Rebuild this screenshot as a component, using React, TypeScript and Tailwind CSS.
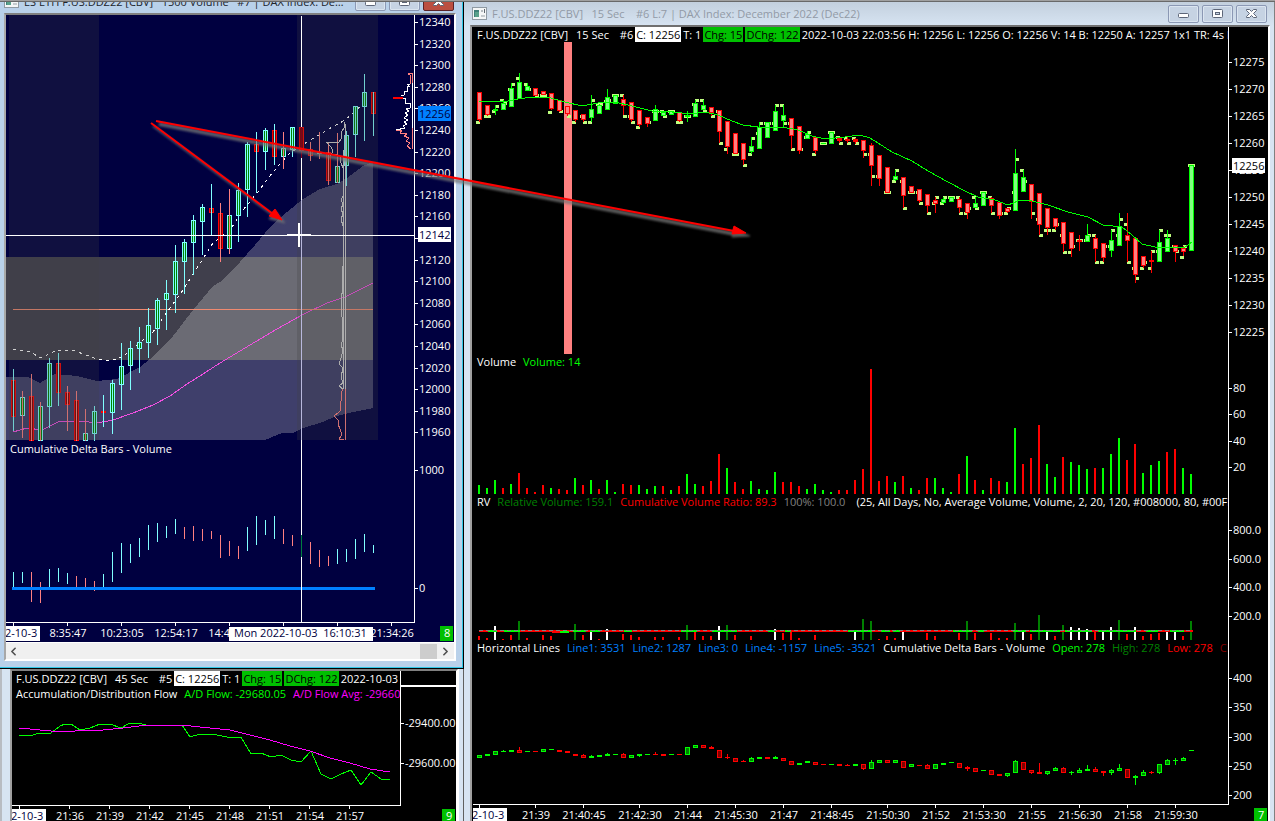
import type { ReactNode } from 'react';
import { ChevronLeft, ChevronRight } from 'lucide-react';

// [up, bodyTop, bodyBottom, high, low, leftMark, rightMark]
type Candle = [number, number, number, number, number, number, number];

const PRICE: Candle[] = [
  [0, 92, 120, 92, 122, 122, 0], [0, 105, 115, 105, 116, 116, 116], [1, 109, 111, 105, 115, 111, 106],
  [1, 103, 110, 100, 110, 100, 103], [1, 88, 107, 83, 107, 89, 84], [1, 82, 99, 73, 99, 78, 0],
  [1, 86, 91, 83, 91, 84, 89], [0, 88, 96, 88, 96, 0, 95], [0, 91, 95, 91, 95, 95, 95],
  [0, 93, 109, 93, 110, 112, 0], [0, 100, 111, 100, 112, 0, 111], [0, 106, 114, 106, 116, 0, 116],
  [0, 110, 120, 110, 122, 122, 0], [0, 114, 120, 114, 122, 116, 122], [1, 109, 118, 95, 122, 122, 100],
  [1, 105, 114, 104, 114, 104, 104], [1, 97, 110, 89, 110, 101, 100], [1, 95, 104, 95, 104, 95, 95],
  [0, 99, 106, 95, 115, 95, 116], [0, 102, 120, 102, 122, 116, 122], [0, 110, 125, 110, 127, 127, 0],
  [0, 117, 124, 117, 127, 0, 122], [1, 109, 121, 105, 121, 111, 111], [1, 112, 116, 112, 116, 111, 116],
  [1, 111, 115, 111, 115, 111, 111], [0, 112, 121, 112, 122, 122, 122], [1, 115, 117, 111, 122, 116, 116],
  [1, 103, 117, 100, 117, 104, 100], [1, 105, 110, 100, 110, 100, 111], [0, 107, 113, 107, 116, 0, 116],
  [0, 110, 132, 110, 143, 111, 143], [0, 121, 147, 121, 154, 149, 0], [0, 133, 154, 133, 154, 154, 154],
  [0, 143, 160, 143, 165, 0, 165], [1, 146, 152, 137, 154, 154, 138], [1, 127, 149, 122, 149, 133, 123],
  [1, 122, 138, 122, 138, 123, 123], [1, 111, 131, 105, 131, 123, 105], [1, 115, 121, 105, 127, 105, 123],
  [0, 118, 136, 118, 149, 123, 149], [0, 126, 151, 126, 154, 0, 149], [1, 134, 139, 131, 139, 137, 132],
  [0, 137, 151, 137, 154, 154, 0], [1, 143, 144, 143, 144, 143, 143], [1, 132, 144, 132, 144, 132, 132],
  [0, 138, 141, 138, 143, 137, 143], [0, 139, 141, 137, 143, 138, 143], [0, 139, 142, 138, 144, 138, 143],
  [0, 140, 151, 140, 158, 0, 154], [0, 145, 166, 143, 186, 154, 176], [0, 155, 179, 155, 186, 176, 0],
  [0, 167, 193, 167, 193, 192, 192], [1, 176, 180, 170, 181, 181, 170], [0, 177, 196, 177, 208, 181, 208],
  [0, 186, 193, 186, 193, 192, 192], [0, 189, 201, 189, 203, 192, 203], [0, 194, 206, 194, 213, 0, 213],
  [0, 200, 204, 197, 213, 203, 197], [1, 199, 203, 197, 204, 203, 197], [1, 197, 202, 197, 202, 197, 197],
  [0, 199, 208, 197, 213, 197, 213], [0, 203, 213, 203, 219, 213, 208], [1, 203, 208, 197, 208, 197, 208],
  [1, 192, 206, 192, 206, 192, 192], [0, 198, 206, 197, 213, 197, 213], [0, 202, 216, 202, 219, 0, 213],
  [0, 208, 212, 208, 213, 213, 208], [1, 173, 211, 149, 211, 192, 159], [1, 177, 192, 170, 192, 170, 181],
  [0, 184, 202, 184, 219, 0, 213], [0, 193, 225, 193, 235, 219, 235], [0, 208, 228, 208, 235, 230, 230],
  [0, 218, 227, 218, 230, 230, 224], [0, 222, 244, 222, 252, 235, 252], [0, 232, 249, 232, 257, 252, 246],
  [0, 240, 242, 235, 251, 240, 240], [1, 235, 242, 224, 242, 240, 235], [0, 238, 249, 235, 262, 235, 262],
  [0, 243, 258, 243, 262, 262, 246], [1, 240, 251, 230, 257, 246, 230], [1, 226, 246, 213, 246, 235, 219],
  [0, 235, 241, 213, 262, 224, 262], [0, 238, 275, 238, 283, 268, 278], [0, 256, 266, 256, 268, 268, 262],
  [0, 260, 262, 251, 273, 268, 251], [1, 242, 262, 230, 262, 251, 230], [1, 238, 252, 230, 252, 235, 235],
  [0, 245, 252, 245, 262, 246, 251], [0, 248, 252, 246, 256, 257, 246], [1, 165, 251, 165, 251, 165, 165],
];

const MOVING_AVG =
  '479,101 508,101 518,99 532,97 547,97 565,102 582,106 598,103 615,102 632,106 652,111 672,112 692,114 705,112 718,115 732,121 743,125 758,127 782,127 798,130 812,136 825,139 845,137 860,135 870,138 878,143 892,152 912,161 928,171 948,182 965,191 978,197 995,200 1008,205 1018,201 1028,200 1048,205 1068,212 1088,217 1103,225 1122,227 1132,235 1142,244 1155,247 1185,247 1192,242';

// positive = buying volume, negative = selling volume
const VOLUME = [
  9, 6, 14, -6, 10, -21, -6, -2, -9, 6, -5, -4, 16, -9, 14, -5, 14, 2, -10, -9, 9, 5, 8, -8, 4, -8, 20, 10, -8, -13,
  -40, 26, -12, -5, 13, 5, 4, 22, -12, -12, -8, 5, 10, 4, 2, -4, -4, -14, -25, -125, -13, -18, 12, -18, 6, -4, -16,
  16, 6, 2, -20, 38, -14, 4, -16, -13, 12, 66, -30, -36, -69, 30, 17, -37, 32, 29, 25, -26, 26, 40, 56, -34, -50, 21,
  29, 33, -42, -45, 26, 20,
];

const RELATIVE: [number, number, string][] = [
  [0, 4, 'r'], [1, 2, 'r'], [2, 14, 'w'], [3, 1, 'r'], [4, 5, 'r'], [5, 19, 'g'], [6, 2, 'r'], [8, 5, 'r'],
  [9, 4, 'r'], [12, 16, 'g'], [13, 5, 'r'], [14, 8, 'w'], [15, 1, 'r'], [16, 11, 'w'], [18, 6, 'r'], [19, 5, 'r'],
  [20, 3, 'r'], [22, 3, 'r'], [23, 3, 'r'], [25, 3, 'r'], [26, 15, 'g'], [27, 8, 'r'], [28, 4, 'r'], [29, 4, 'r'],
  [30, 14, 'w'], [31, 15, 'g'], [32, 5, 'r'], [34, 4, 'r'], [37, 11, 'w'], [38, 7, 'r'], [39, 8, 'r'], [40, 2, 'r'],
  [42, 5, 'r'], [47, 8, 'w'], [48, 21, 'g'], [49, 19, 'g'], [50, 1, 'r'], [51, 4, 'r'], [52, 2, 'r'], [53, 8, 'w'],
  [56, 7, 'r'], [57, 4, 'r'], [60, 7, 'r'], [61, 19, 'g'], [62, 7, 'r'], [64, 7, 'r'], [65, 2, 'r'], [66, 2, 'r'],
  [67, 17, 'g'], [68, 8, 'w'], [69, 6, 'r'], [70, 25, 'g'], [71, 8, 'w'], [72, 4, 'r'], [73, 15, 'g'], [74, 13, 'w'],
  [75, 12, 'w'], [76, 11, 'w'], [77, 9, 'r'], [78, 8, 'w'], [79, 13, 'w'], [80, 20, 'g'], [81, 6, 'r'], [82, 13, 'w'],
  [83, 4, 'r'], [84, 6, 'r'], [85, 7, 'r'], [86, 8, 'w'], [87, 8, 'w'], [88, 4, 'r'], [89, 19, 'g'],
];

const RATIO_UP: [number, number][] = [
  [488, 497], [504, 520], [573, 586], [590, 600], [624, 632], [681, 697], [712, 737], [768, 775], [785, 791],
  [848, 872], [881, 890], [893, 900], [953, 972], [978, 984], [1013, 1026], [1030, 1060], [1065, 1092],
  [1098, 1136], [1146, 1158], [1170, 1184],
];

// [up, top, bottom, high, low]
const DELTA: [number, number, number, number, number][] = [
  [1, 755, 758, 755, 758], [1, 754, 756, 754, 756], [1, 751, 755, 751, 755], [1, 751, 752, 750, 752],
  [1, 750, 752, 750, 752], [0, 750, 753, 747, 753], [1, 751, 752, 751, 752], [0, 751, 752, 751, 752],
  [1, 749, 752, 749, 752], [1, 749, 750, 749, 750], [0, 750, 752, 750, 752], [0, 751, 753, 751, 753],
  [0, 754, 756, 754, 756], [0, 755, 758, 754, 758], [1, 756, 758, 755, 758], [1, 755, 757, 755, 757],
  [1, 754, 756, 753, 756], [1, 754, 755, 754, 755], [0, 754, 758, 753, 758], [1, 755, 758, 755, 758],
  [1, 754, 756, 754, 757], [1, 754, 755, 754, 755], [0, 754, 755, 752, 755], [0, 754, 756, 754, 756],
  [1, 754, 755, 754, 755], [0, 754, 755, 754, 755], [1, 747, 755, 747, 755], [1, 745, 748, 745, 748],
  [0, 745, 748, 745, 748], [0, 747, 749, 746, 749], [0, 750, 758, 750, 758], [0, 757, 758, 754, 759],
  [0, 758, 762, 758, 762], [0, 761, 762, 760, 762], [1, 758, 762, 757, 762], [1, 757, 759, 757, 759],
  [0, 757, 759, 757, 759], [1, 757, 759, 756, 759], [0, 758, 761, 758, 761], [0, 761, 765, 761, 765],
  [1, 763, 765, 763, 765], [1, 761, 763, 761, 763], [0, 762, 765, 762, 765], [0, 764, 765, 764, 765],
  [1, 764, 765, 764, 765], [0, 764, 766, 764, 766], [0, 765, 766, 764, 766], [1, 764, 766, 764, 766],
  [0, 764, 769, 764, 770], [1, 762, 769, 760, 769], [1, 760, 763, 760, 763], [0, 760, 763, 760, 763],
  [1, 760, 763, 760, 763], [0, 761, 768, 761, 768], [1, 764, 767, 764, 767], [0, 765, 766, 765, 766],
  [0, 765, 769, 764, 769], [1, 764, 769, 764, 769], [1, 763, 765, 763, 765], [1, 762, 763, 762, 763],
  [0, 763, 768, 763, 768], [0, 767, 769, 766, 771], [0, 768, 772, 768, 772], [1, 770, 771, 770, 771],
  [0, 770, 775, 770, 775], [0, 774, 776, 774, 776], [1, 773, 776, 773, 777], [1, 761, 773, 760, 773],
  [0, 762, 770, 762, 770], [0, 770, 773, 770, 774], [0, 772, 774, 763, 774], [1, 771, 774, 771, 775],
  [1, 768, 771, 767, 771], [0, 768, 773, 767, 773], [1, 772, 773, 771, 775], [1, 770, 773, 768, 773],
  [1, 769, 771, 765, 771], [0, 769, 772, 767, 772], [0, 771, 773, 771, 776], [1, 770, 773, 769, 775],
  [1, 768, 771, 764, 771], [0, 769, 778, 769, 778], [1, 776, 778, 775, 785], [1, 772, 776, 770, 776],
  [0, 772, 773, 771, 774], [1, 764, 773, 764, 774], [1, 760, 765, 759, 765], [1, 760, 761, 758, 765],
  [1, 758, 761, 757, 761], [1, 750, 751, 750, 751],
];

// [up, top, bottom, high, low, wickUp]
const SWING: [number, number, number, number, number, number][] = [
  [0, 380, 417, 369, 431, 1], [1, 397, 416, 391, 438, 0], [0, 396, 441, 374, 441, 0], [1, 406, 441, 402, 441, 0],
  [1, 363, 407, 358, 428, 1], [0, 363, 393, 353, 406, 1], [0, 392, 405, 386, 431, 0], [0, 400, 441, 391, 441, 0],
  [1, 433, 441, 409, 441, 0], [1, 411, 434, 406, 441, 1], [0, 411, 413, 395, 427, 1], [1, 383, 413, 380, 434, 1],
  [1, 366, 385, 343, 410, 1], [1, 348, 366, 341, 390, 1], [1, 342, 349, 327, 373, 1], [1, 325, 343, 308, 358, 1],
  [1, 300, 329, 298, 345, 1], [1, 293, 300, 280, 330, 1], [1, 261, 295, 245, 313, 1], [1, 242, 262, 239, 294, 1],
  [1, 220, 243, 215, 275, 1], [1, 207, 222, 204, 255, 1], [0, 208, 213, 184, 235, 1], [0, 213, 249, 203, 262, 0],
  [1, 215, 249, 189, 254, 0], [1, 190, 216, 183, 242, 1], [1, 144, 190, 142, 217, 1], [0, 144, 152, 132, 193, 1],
  [1, 130, 152, 128, 170, 1], [0, 130, 157, 124, 165, 1], [1, 148, 157, 132, 169, 0], [1, 127, 150, 127, 157, 1],
  [0, 127, 151, 122, 158, 0], [0, 149, 156, 142, 161, 0], [1, 152, 154, 132, 159, 0], [0, 152, 181, 143, 185, 0],
  [1, 166, 183, 133, 183, 0], [1, 135, 166, 131, 186, 1], [1, 106, 135, 106, 157, 1], [1, 92, 107, 74, 141, 1],
  [0, 92, 114, 92, 136, 1],
];

const SWING_DELTA: [number, number, number][] = [
  [1, 572, 588], [1, 572, 583], [0, 572, 602], [0, 582, 603], [1, 569, 588], [1, 568, 582], [1, 573, 584],
  [0, 576, 588], [0, 578, 588], [0, 581, 591], [1, 574, 588], [1, 552, 582], [1, 543, 573], [1, 544, 563],
  [1, 538, 557], [1, 525, 550], [1, 523, 542], [1, 526, 538], [1, 519, 534], [0, 527, 539], [0, 526, 541],
  [0, 529, 541], [0, 531, 539], [0, 535, 558], [0, 541, 556], [0, 546, 559], [1, 527, 551], [1, 516, 545],
  [1, 520, 535], [1, 516, 539], [0, 529, 544], [0, 535, 546], [1, 535, 557], [0, 542, 564], [0, 550, 567],
  [0, 556, 566], [1, 549, 564], [1, 549, 562], [1, 539, 559], [1, 534, 552], [1, 545, 553],
];

const CLOUD =
  '6,377 28,377 40,383 55,374 77,376 97,381 117,379 140,367 150,359 170,340 193,310 213,286 222,281 240,262 255,245 270,227 287,212 303,199 320,189 337,184 347,178 363,166 373,162 373,408 353,412 337,416 320,423 303,428 293,433 282,433 265,440 6,440';

const FONT = 'font-["Open_Sans","Noto_Sans",sans-serif]';

type PlotProps = { x: number; y: number; className: string; children: ReactNode };

// Drawing surface that shares one coordinate space across panes
function Plot({ x, y, className, children }: PlotProps) {
  return (
    <svg className={`block w-full ${className}`} shapeRendering="crispEdges">
      <g transform={`translate(${-x} ${-y})`}>{children}</g>
    </svg>
  );
}

type Mark = [string, number];

function Scale({ x, y, className, marks, children }: Omit<PlotProps, 'children'> & { marks: Mark[]; children?: ReactNode }) {
  return (
    <svg className={`block shrink-0 text-[11px] ${className}`} shapeRendering="crispEdges">
      <g transform={`translate(${-x} ${-y})`}>
        {marks.map(([label, my]) => (
          <g key={label}>
            <rect x={x} y={my} width={3} height={1} fill="#fff" />
            <text x={x + 4} y={my + 4} fill="#fff">{label}</text>
          </g>
        ))}
        {children}
      </g>
    </svg>
  );
}

function TimeScale({ x, y, end, marks, tick, children }: { x: number; y: number; end: number; marks: Mark[]; tick: number; children?: ReactNode }) {
  return (
    <svg className="block h-5 w-full text-[11px]" shapeRendering="crispEdges">
      <g transform={`translate(${-x} ${-y})`}>
        <rect x={x} y={y} width={end - x} height={1} fill="#fff" />
        <rect x={tick} y={y} width={1} height={4} fill="#fff" />
        {marks.map(([label, mx]) => (
          <g key={label}>
            <rect x={mx} y={y} width={1} height={4} fill="#fff" />
            <text x={mx + 1} y={y + 15} textAnchor="middle" fill="#fff">{label}</text>
          </g>
        ))}
        <rect x={x} y={y + 4} width={34} height={15} fill="#fff" />
        <text x={x - 1} y={y + 15} fill="#000040">2-10-3</text>
        {children}
      </g>
    </svg>
  );
}

function Legend({ children }: { children: ReactNode }) {
  return <div className="flex h-[15px] items-center gap-[7px] overflow-hidden pl-1 text-[11px] leading-[15px] whitespace-pre text-white">{children}</div>;
}

function Quote({ period, chart }: { period: string; chart: string }) {
  return (
    <div className="flex h-[15px] shrink-0 items-center text-[11px] leading-[15px] whitespace-pre">
      <span>F.US.DDZ22 [CBV]</span>
      <span className="ml-2">{period}</span>
      <span className="ml-2">{chart}</span>
      <span className="ml-0.5 bg-white px-px text-black">C: 12256</span>
      <span className="mx-0.5">T: 1</span>
      <span className="bg-[#00c000] px-px text-black">Chg: 15</span>
      <span className="ml-0.5 bg-[#00c000] px-px text-black">DChg: 122</span>
    </div>
  );
}

function AppIcon() {
  return (
    <svg className="h-3.5 w-[15px] shrink-0" viewBox="0 0 15 14">
      <rect x="0.5" y="0.5" width="14" height="12" fill="#f4f6f6" stroke="#8f9aa3" />
      <rect x="2" y="3" width="5" height="7" fill="#3f7f78" />
      <rect x="3" y="5" width="4" height="5" fill="#58a18a" />
      <rect x="9" y="3" width="2" height="2" fill="#b5bcc0" />
      <rect x="12" y="2" width="1" height="4" fill="#5f6870" />
      <rect x="9" y="8" width="4" height="2" fill="#c4cacd" />
    </svg>
  );
}

function TitleBar({ title, active }: { title: string; active?: boolean }) {
  const button = 'flex h-[18px] w-[31px] items-center justify-center rounded-[2px] border border-[#8b98b4] bg-[#c6d3e3] shadow-[inset_0_0_0_1px_#dbe5f0]';
  return (
    <div className="flex h-[23px] shrink-0 items-center">
      <AppIcon />
      <h2 className={`ml-[5px] flex-1 truncate pr-2 text-[11px] leading-5 whitespace-pre ${active ? 'text-[#20242c]' : 'text-[#929aa6]'}`}>{title}</h2>
      <div className="flex gap-[3px]">
        <button aria-label="Minimize" className={button}>
          <svg width="13" height="11" viewBox="0 0 13 11"><rect x="1.5" y="5.5" width="10" height="4" rx="1" fill="#fff" stroke="#5d6678" /></svg>
        </button>
        <button aria-label="Maximize" className={button}>
          <svg width="13" height="11" viewBox="0 0 13 11">
            <rect x="1.5" y="1.5" width="10" height="8" rx="1" fill="#fff" stroke="#5d6678" />
            <rect x="4.5" y="4.5" width="4" height="2" fill="#c6d3e3" stroke="#5d6678" />
          </svg>
        </button>
        <button
          aria-label="Close"
          className={active ? 'flex h-[18px] w-[31px] items-center justify-center rounded-[2px] border border-[#5b2226] bg-[#bb4f41]' : button}
        >
          <svg width="13" height="11" viewBox="0 0 13 11">
            <path d="M1.5 1.5h3l2 2 2-2h3v1l-3 3 3 3v1h-3l-2-2-2 2h-3v-1l3-3-3-3z" fill="#fff" stroke="#5d6678" />
          </svg>
        </button>
      </div>
    </div>
  );
}

function PriceCandles() {
  return (
    <>
      {PRICE.map(([, , , , , left, right], i) => (
        <g key={i} fill="#c0ff80">
          {left > 0 && <rect x={476 + i * 8} y={left - 1} width={4} height={3} />}
          {right > 0 && <rect x={479 + i * 8} y={right - 1} width={4} height={3} />}
        </g>
      ))}
      {PRICE.map(([up, top, bottom, high, low], i) => {
        const x = 479 + i * 8;
        const line = up ? '#00ff00' : '#ff0000';
        return (
          <g key={i}>
            <rect x={x} y={high} width={1} height={low - high} fill={line} />
            <rect x={x - 2} y={top} width={5} height={bottom - top} fill={line} />
            {bottom - top > 3 && <rect x={x - 1} y={top + 1} width={3} height={bottom - top - 2} fill={up ? '#80ff80' : '#ff8080'} />}
          </g>
        );
      })}
    </>
  );
}

function SwingPlot() {
  return (
    <Plot x={6} y={15} className="h-[426px]">
      <rect x={6} y={257} width={367} height={103} fill="#403f4c" />
      <polygon points={CLOUD} fill="#cfcfcf" fillOpacity={0.3} />
      <polyline points="13,432 27,428 42,430 60,421 80,421 97,423 113,420 133,413 153,405 170,396 187,384 203,374 220,363 250,345 277,329 302,315 327,303 345,297 373,283" fill="none" stroke="#f050e0" />
      <rect x={13} y={309} width={360} height={1} fill="#f08a70" />
      <polyline
        points="13,349 30,352 41,358 57,350 75,351 97,359 110,361 122,357 137,345 153,332 170,308 183,290 204,257 213,243 230,230 243,210 257,193 273,172 290,153 307,142 327,130 345,120 363,104"
        fill="none" stroke="#fff" strokeDasharray="3 4"
      />
      {SWING.map(([up, top, bottom, high, low, wickUp], i) => {
        const x = 13 + i * 9;
        return (
          <g key={i}>
            <rect x={x - 2} y={top} width={5} height={bottom - top} fill={up ? '#80ffff' : '#ff0000'} />
            {bottom - top > 3 && <rect x={x - 1} y={top + 1} width={3} height={bottom - top - 2} fill={up ? '#008000' : '#800000'} />}
            <rect x={x} y={high} width={1} height={low - high} fill={wickUp ? '#80ffff' : '#ff8080'} />
          </g>
        );
      })}
      {/* session volume profile */}
      <polyline points="345,122 344,128 341,133 341,139 339,142 326,142 328,144 331,147 333,151 331,155 337,154 340,157 341,163 343,168 343,196 341,200 343,204 341,209 343,214 341,219 343,226 343,266 342,267 343,293 341,294 343,339 341,345 343,350 341,358 339,364 343,368 341,377 343,383 339,386 343,389" fill="none" stroke="#d0d0d0" />
      <polyline points="343,389 341,393 342,398 340,404 341,410 338,413 334,416 338,420 338,424 340,429 342,435 339,439 344,440" fill="none" stroke="#ff8080" />
      <rect x={343} y={150} width={1} height={239} fill="#d0d0d0" />
      <rect x={345} y={124} width={1} height={265} fill="#d0d0d0" />
      <rect x={345} y={389} width={1} height={51} fill="#ff8080" />
      <rect x={9} y={15} width={90} height={425} fill="#404040" fillOpacity={0.25} />
      <rect x={297} y={15} width={81} height={425} fill="#404040" fillOpacity={0.25} />
      {/* full volume profile */}
      <rect x={412} y={73} width={1} height={76} fill="#fff" />
      <polyline points="412,73 408,74 410,75 410,84" fill="none" stroke="#ff8080" />
      <polyline points="410,84 407,84 409,86 407,86 407,91 404,91 404,95 401,96" fill="none" stroke="#fff" />
      <path d="M403 97H393M393 98H403" stroke="#ff0000" />
      <polyline points="403,98 405,98 405,103 410,103 410,108 406,109 409,111 405,113 408,115 404,118 408,120 404,122 407,124 403,126 405,128 396,130" fill="none" stroke="#fff" />
      <polyline points="396,130 402,130 400,133 407,134 404,136 409,138 406,141 410,143 407,146 411,149" fill="none" stroke="#ff8080" />
      <rect x={412} y={73} width={1} height={10} fill="#ff8080" />
      <rect x={412} y={128} width={1} height={21} fill="#ff8080" />
    </Plot>
  );
}

function SwingWindow() {
  const marks: Mark[] = Array.from({ length: 20 }, (_, k) => [String(12340 - k * 20), Math.round(22 + k * 21.6)]);
  return (
    <section className="flex shrink-0 flex-col border-r border-b border-black bg-[#b9d1ea]">
      <div className="flex flex-col border-r border-b border-[#30c8e8] pr-1.5 pb-1.5 pl-1">
        <div className="flex h-[11px] flex-col justify-end overflow-hidden pr-0.5">
          <TitleBar active title="ES ETH F.US.DDZ22 [CBV]   1500 Volume   #7 | DAX Index: December 2022 (Dec22)" />
        </div>
        <div className="border-2 border-t-[#808080] border-r-white border-b-white border-l-[#a8a8a8] bg-[#000040] text-white">
          <div className="relative">
            <div className="flex">
              <div className="min-w-0 flex-1 border-r border-white">
                <SwingPlot />
                <Legend>Cumulative Delta Bars - Volume</Legend>
                <Plot x={6} y={456} className="h-[166px]">
                  {SWING_DELTA.map(([up, top, bottom], i) => (
                    <rect key={i} x={13 + i * 9} y={top} width={1} height={bottom - top} fill={up ? '#80ffff' : '#ff8080'} />
                  ))}
                  <rect x={12} y={587} width={363} height={3} fill="#0080ff" />
                </Plot>
              </div>
              <Scale x={415} y={15} className="h-[607px] w-[39px]" marks={[...marks, ['1000', 470], ['0', 588]]}>
                <rect x={418} y={106} width={33} height={15} fill="#0080ff" />
                <text x={419} y={118} fill="#000040">12256</text>
                <rect x={418} y={227} width={33} height={15} fill="#fff" />
                <text x={419} y={239} fill="#000040">12142</text>
              </Scale>
            </div>
            {/* crosshair */}
            <svg className="pointer-events-none absolute inset-0 h-full w-full" shapeRendering="crispEdges">
              <rect x={0} y={220} width={408} height={1} fill="#fff" />
              <rect x={295} y={1} width={1} height={606} fill="#fff" />
              <rect x={295} y={185} width={1} height={240} fill="#b8b8dc" />
              <rect x={295} y={112} width={1} height={31} fill="#800020" />
              <rect x={295} y={520} width={1} height={22} fill="#008040" />
              <rect x={281} y={219} width={24} height={2} fill="#fff" />
              <rect x={292} y={208} width={2} height={24} fill="#fff" />
            </svg>
          </div>
          <TimeScale x={6} y={622} end={415} tick={13} marks={[['8:35:47', 67], ['10:23:05', 121], ['12:54:17', 175], ['14:44:12', 229], ['21:34:26', 391]]}>
            <rect x={283} y={622} width={1} height={4} fill="#fff" />
            <rect x={337} y={622} width={1} height={4} fill="#fff" />
            <rect x={229} y={627} width={144} height={14} fill="#fff" />
            <text x={234} y={637} fill="#000040" className="whitespace-pre">Mon 2022-10-03  16:10:31</text>
            <rect x={440} y={626} width={13} height={15} fill="#00c000" />
            <text x={444} y={637} fill="#fff">8</text>
          </TimeScale>
          <div className="flex h-[17px] items-center border-t border-white bg-[#f0f0f0] text-[#505050]">
            <button aria-label="Scroll left" className="flex w-3.5 justify-center"><ChevronLeft size={13} strokeWidth={3} /></button>
            <div className="flex flex-1 justify-end"><div className="h-[15px] w-[17px] bg-[#cdcdcd]" /></div>
            <button aria-label="Scroll right" className="flex w-[17px] justify-center"><ChevronRight size={13} strokeWidth={3} /></button>
          </div>
        </div>
      </div>
    </section>
  );
}

function FlowWindow() {
  const times = ['21:36', '21:39', '21:42', '21:45', '21:48', '21:51', '21:54', '21:57'];
  return (
    <section className="flex min-h-0 flex-1 border-l-2 border-[#b8bcc2] bg-[#d7e4f2] pl-2">
      <div className="min-w-0 flex-1 overflow-hidden border-2 border-r-2 border-b-0 border-t-[#808080] border-r-white border-l-[#a0a0a0] bg-black text-white">
        <div className="flex">
          <div className="min-w-0 flex-1 overflow-hidden border-r border-white">
            <div className="flex overflow-hidden pl-1 text-[11px] leading-[15px] whitespace-pre">
              <Quote period="45 Sec" chart=" #5" />
              <span className="ml-0.5">2022-10-03 22:03:56</span>
            </div>
            <Legend>
              <span>Accumulation/Distribution Flow</span>
              <span className="text-[#00ff00]">A/D Flow: -29680.05</span>
              <span className="text-[#ff00ff]">A/D Flow Avg: -29660.16</span>
            </Legend>
            <Plot x={12} y={701} className="h-[104px]">
              <polyline
                points="19,735 33,735 39,733 51,733 60,726 65,724 71,724 80,730 90,728 100,724 110,724 121,728 128,724 138,723 150,726 160,725 182,725 190,737 200,734 212,734 227,737 241,737 251,754 261,753 271,757 281,755 291,760 301,762 311,751 321,774 331,779 341,774 351,770 361,785 371,772 381,779 390,779"
                fill="none" stroke="#00ff00"
              />
              <polyline points="19,728 51,731 75,731 82,730 103,730 123,728 147,725 167,726 182,725 200,727 220,729 230,730 250,735 270,740 290,746 310,751 330,758 350,763 370,769 390,772" fill="none" stroke="#ff00ff" />
            </Plot>
          </div>
          <Scale x={401} y={671} className="h-[134px] w-[55px]" marks={[['-29400.00', 723], ['-29600.00', 763]]}>
            <rect x={401} y={685} width={55} height={2} fill="#fff" />
          </Scale>
        </div>
        <TimeScale x={12} y={805} end={401} tick={19} marks={times.map((t, i) => [t, 69 + i * 40])}>
          <rect x={442} y={809} width={13} height={15} fill="#00c000" />
          <text x={446} y={820} fill="#fff">9</text>
        </TimeScale>
      </div>
      <div className="w-[5px] border-l border-white bg-[#d7e4f2]" />
      <div className="w-px bg-[#606060]" />
    </section>
  );
}

const RV_FILL: Record<string, string> = { r: '#ff0000', w: '#ffffff', g: '#008000' };

type PaneProps = { legend: ReactNode; plot: ReactNode; scale: ReactNode };

function Pane({ legend, plot, scale }: PaneProps) {
  return (
    <div className="flex shrink-0">
      <div className="min-w-0 flex-1 overflow-hidden border-r border-white">
        <Legend>{legend}</Legend>
        {plot}
      </div>
      {scale}
    </div>
  );
}

function IntradayWindow() {
  return (
    <section className="flex min-w-0 flex-1 flex-col border-r border-[#808080] bg-linear-to-b from-[#c3d0de] to-[#d7e4f2] to-[24px] pr-1 pl-1.5">
      <div className="flex flex-col pr-[3px] pl-0.5">
        <TitleBar title="F.US.DDZ22 [CBV]   15 Sec    #6 L:7 | DAX Index: December 2022 (Dec22)" />
      </div>
      <div className="flex min-h-0 flex-1 flex-col overflow-hidden border-2 border-b-0 border-t-[#707070] border-r-white border-l-[#a0a0a0] bg-black pl-px text-white">
        <Pane
          legend={
            <div className="flex">
              <Quote period="15 Sec" chart=" #6" />
              <span className="ml-0.5">2022-10-03 22:03:56 H: 12256 L: 12256 O: 12256 V: 14 B: 12250 A: 12257 1x1 TR: 4s BV: 6 AV: 8</span>
            </div>
          }
          plot={
            <Plot x={473} y={42} className="h-[312px]">
              <rect x={564} y={42} width={8} height={312} fill="#ff8080" />
              <PriceCandles />
              <polyline points={MOVING_AVG} fill="none" stroke="#00ff00" />
            </Plot>
          }
          scale={
            <Scale x={1229} y={27} className="h-[327px] w-[39px]" marks={Array.from({ length: 11 }, (_, k) => [String(12275 - k * 5), 62 + k * 27])}>
              <rect x={1232} y={158} width={33} height={15} fill="#fff" />
              <text x={1233} y={170} fill="#000">12256</text>
            </Scale>
          }
        />
        <Pane
          legend={<><span>Volume</span><span className="text-[#00ff00]">Volume: 14</span></>}
          plot={
            <Plot x={473} y={369} className="h-[125px]">
              {VOLUME.map((v, i) => (
                <rect key={i} x={478 + i * 8} y={494 - Math.abs(v)} width={2} height={Math.abs(v)} fill={v > 0 ? '#00ff00' : '#ff0000'} />
              ))}
            </Plot>
          }
          scale={<Scale x={1229} y={354} className="h-[140px] w-[39px]" marks={[['80', 388], ['60', 414], ['40', 441], ['20', 467]]} />}
        />
        <Pane
          legend={
            <>
              <span>RV</span>
              <span className="text-[#008000]">Relative Volume: 159.1</span>
              <span className="text-[#ff0000]">Cumulative Volume Ratio: 89.3</span>
              <span className="text-[#808080]">100%: 100.0</span>
              <span className="ml-1">(25, All Days, No, Average Volume, Volume, 2, 20, 120, #008000, 80, #00FF00)</span>
            </>
          }
          plot={
            <Plot x={473} y={509} className="h-[131px]">
              {RELATIVE.map(([i, h, c]) => (
                <rect key={i} x={478 + i * 8} y={640 - h} width={2} height={h} fill={RV_FILL[c]} />
              ))}
              <rect x={479} y={630} width={714} height={2} fill="#ff0000" />
              {RATIO_UP.map(([a, b]) => (
                <rect key={a} x={a} y={630} width={b - a} height={2} fill="#00ff00" />
              ))}
              <rect x={552} y={631} width={8} height={2} fill="#ff0000" />
              <rect x={560} y={631} width={9} height={2} fill="#00ff00" />
              <line x1={479} x2={1193} y1={630.5} y2={630.5} stroke="#808080" strokeDasharray="4 3" />
            </Plot>
          }
          scale={<Scale x={1229} y={494} className="h-[146px] w-[39px]" marks={[['800.0', 530], ['600.0', 559], ['400.0', 587], ['200.0', 616]]} />}
        />
        <Pane
          legend={
            <>
              <span>Horizontal Lines</span>
              <span className="text-[#0080ff]">Line1: 3531</span>
              <span className="text-[#0080ff]">Line2: 1287</span>
              <span className="text-[#0080ff]">Line3: 0</span>
              <span className="text-[#0080ff]">Line4: -1157</span>
              <span className="text-[#0080ff]">Line5: -3521</span>
              <span>Cumulative Delta Bars - Volume</span>
              <span className="text-[#00ff00]">Open: 278</span>
              <span className="text-[#008000]">High: 278</span>
              <span className="text-[#ff0000]">Low: 278</span>
              <span className="text-[#800000]">Close: 278</span>
            </>
          }
          plot={
            <Plot x={473} y={655} className="h-[149px]">
              {DELTA.map(([up, top, bottom, high, low], i) => {
                const x = 479 + i * 8;
                const line = up ? '#00ff00' : '#ff0000';
                return (
                  <g key={i}>
                    <rect x={x} y={high} width={1} height={low - high} fill={line} />
                    <rect x={x - 2} y={top} width={5} height={bottom - top} fill={line} />
                    {bottom - top > 2 && <rect x={x - 1} y={top + 1} width={3} height={bottom - top - 2} fill={up ? '#008000' : '#800000'} />}
                  </g>
                );
              })}
            </Plot>
          }
          scale={<Scale x={1229} y={640} className="h-[164px] w-[39px]" marks={[['400', 678], ['350', 707], ['300', 737], ['250', 766], ['200', 795]]} />}
        />
        <TimeScale
          x={473} y={804} end={1229} tick={479}
          marks={[
            ['21:39', 535], ['21:40:45', 583], ['21:42:30', 639], ['21:44', 687], ['21:45:30', 735], ['21:47', 783], ['21:48:45', 831],
            ['21:50:30', 887], ['21:52', 935], ['21:53:30', 983], ['21:55', 1031], ['21:56:30', 1079], ['21:58', 1127], ['21:59:30', 1175],
          ]}
        >
          <rect x={1254} y={808} width={13} height={15} fill="#00c000" />
          <text x={1258} y={819} fill="#fff">7</text>
        </TimeScale>
      </div>
    </section>
  );
}

// Hand-drawn annotation arrows laid over both windows
function Arrows() {
  return (
    <svg className="pointer-events-none absolute inset-0 h-full w-full">
      <defs>
        <filter id="soft"><feGaussianBlur stdDeviation="1" /></filter>
      </defs>
      <g stroke="#777" fill="#777" opacity="0.75" filter="url(#soft)">
        <path d="M159 124L735 234" strokeWidth="4" />
        <path d="M750 236L732 237L734 229z" />
        <path d="M153 126L274 216" strokeWidth="2" />
        <path d="M285 223L269 219L275 211z" />
      </g>
      <g stroke="#ff0000" fill="#ff0000">
        <path d="M156 121L734 231" strokeWidth="2" />
        <path d="M746 233L732 234L734 226z" />
        <path d="M151 123L273 214" strokeWidth="2" />
        <path d="M282 220L269 216L275 209z" />
      </g>
    </svg>
  );
}

export default function App() {
  return (
    <main className={`relative flex h-screen flex-col overflow-hidden bg-[#d7e4f2] ${FONT}`}>
      <div className="h-[2px] shrink-0 border-b border-[#696969] bg-[#a0a0a0]" />
      <div className="flex min-h-0 flex-1">
        <div className="flex w-[464px] shrink-0 flex-col">
          <SwingWindow />
          <FlowWindow />
        </div>
        <IntradayWindow />
      </div>
      <Arrows />
    </main>
  );
}
